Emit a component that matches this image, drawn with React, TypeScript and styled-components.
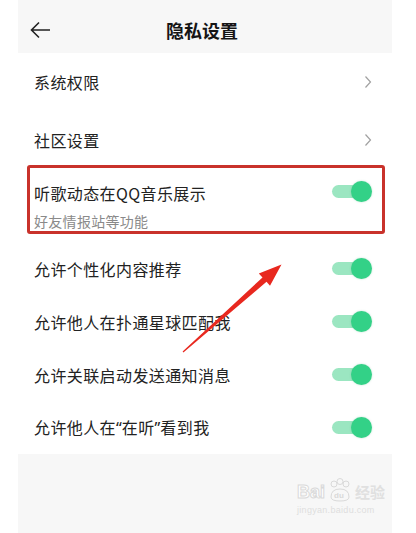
import styled, { createGlobalStyle } from "styled-components";

const GlobalStyle = createGlobalStyle`
  html, body {
    margin: 0;
    padding: 0;
    background: #ffffff;
  }
  body {
    font-family: "Noto Sans CJK SC", "Noto Sans", sans-serif;
    color: #222222;
  }
`

const Page = styled.div`
  position: relative;
  width: 416px;
  height: 533px;
  overflow: hidden;
  background: #ffffff;
`

const Panel = styled.div`
  margin: 0 24px 0 18px;
  display: flex;
  flex-direction: column;
  height: 533px;
`

const Header = styled.div`
  height: 53px;
  background: #f7f7f7;
  display: grid;
  grid-template-columns: 60px 1fr 60px;
  align-items: center;
`

const BackButton = styled.div`
  display: flex;
  align-items: center;
  padding-left: 12px;
  padding-top: 6px;
`

const Title = styled.div`
  text-align: center;
  font-size: 18px;
  font-weight: 700;
  color: #151515;
  padding-top: 6px;
  padding-right: 6px;
`

const List = styled.div`
  display: flex;
  flex-direction: column;
`

const Row = styled.div<{ $h: number }>`
  height: ${p => p.$h}px;
  display: flex;
  align-items: center;
  justify-content: space-between;
  padding: 0 20px 0 16px;
`

const Label = styled.span`
  font-size: 16px;
  line-height: 22px;
  color: #222222;
  letter-spacing: 0.4px;
`

const Quote = styled.span`
  font-family: "Noto Sans", sans-serif;
  letter-spacing: 0;
`

const Highlight = styled.div`
  margin: -4px 7px 8px 9px;
  height: 63px;
  border: 3px solid #c9322b;
  border-radius: 3px;
  display: flex;
  align-items: flex-start;
  justify-content: space-between;
  padding: 0 10px 0 4px;
`

const TextStack = styled.div`
  display: flex;
  flex-direction: column;
  gap: 7px;
  padding-top: 14px;
`

const SubLabel = styled.span`
  font-size: 14px;
  line-height: 20px;
  color: #8a8a8a;
  letter-spacing: 0.3px;
`

const Toggle = styled.div`
  position: relative;
  width: 40px;
  height: 21px;
  flex-shrink: 0;

  &::before {
    content: "";
    position: absolute;
    left: 0;
    right: 2px;
    top: 4px;
    height: 13px;
    border-radius: 7px;
    background: #9be6c1;
  }

  &::after {
    content: "";
    position: absolute;
    right: 0;
    top: 0;
    width: 21px;
    height: 21px;
    border-radius: 50%;
    background: #33d187;
    box-shadow: 0 0 2px rgba(40, 160, 100, 0.35);
  }
`

const HighlightToggle = styled(Toggle)`
  margin-top: 13px;
`

const Footer = styled.div`
  flex: 1;
  background: #f7f7f7;
`

const Overlay = styled.svg`
  position: absolute;
  left: 0;
  top: 0;
  pointer-events: none;
`

const Watermark = styled.div`
  position: absolute;
  left: 297px;
  top: 478px;
  display: flex;
  flex-direction: column;
  align-items: flex-start;
  color: #e2e2e2;
  font-family: "Liberation Sans", sans-serif;
`

const MarkTop = styled.div`
  display: flex;
  align-items: flex-end;
  gap: 2px;
  font-size: 18px;
  font-weight: 700;
  line-height: 20px;
`

const MarkLogo = styled.span`
  color: #ffffff;
  -webkit-text-stroke: 1px #d9d9d9;
`

const MarkCn = styled.span`
  font-family: "Noto Sans CJK SC", sans-serif;
  font-size: 15px;
  color: #e0e0e0;
`

const MarkUrl = styled.div`
  font-size: 9px;
  color: #dedede;
  margin-top: 3px;
  letter-spacing: 0.3px;
`

const Chevron = () => (
  <svg width="8" height="14" viewBox="0 0 8 14">
    <path d="M1.5 1.5 L6.5 7 L1.5 12.5" fill="none" stroke="#a0a0a0" strokeWidth="1.2" />
  </svg>
)

const toggles = [
  <>允许个性化内容推荐</>,
  <>允许他人在扑通星球匹配我</>,
  <>允许关联启动发送通知消息</>,
  <>允许他人在<Quote>“</Quote>在听<Quote>”</Quote>看到我</>,
]

export default function App() {
  return (
    <Page>
      <GlobalStyle />
      <Panel>
        <Header>
          <BackButton>
            <svg width="22" height="18" viewBox="0 0 22 18">
              <path d="M20 9 H2 M9 1.5 L1.5 9 L9 16.5" fill="none" stroke="#222" strokeWidth="1.6" />
            </svg>
          </BackButton>
          <Title>隐私设置</Title>
          <div />
        </Header>
        <List>
          <Row $h={58}>
            <Label>系统权限</Label>
            <Chevron />
          </Row>
          <Row $h={58}>
            <Label>社区设置</Label>
            <Chevron />
          </Row>
          <Highlight>
            <TextStack>
              <Label>听歌动态在QQ音乐展示</Label>
              <SubLabel>好友情报站等功能</SubLabel>
            </TextStack>
            <HighlightToggle />
          </Highlight>
          {toggles.map((t, i) => (
            <Row $h={53} key={i}>
              <Label>{t}</Label>
              <Toggle />
            </Row>
          ))}
        </List>
        <Footer />
      </Panel>
      <Overlay width="416" height="533" viewBox="0 0 416 533">
        <polygon
          points="183.4,352.6 266.5,281.8 270,285.8 281.5,264.5 258.8,273.4 262.5,277.4 182.6,351.4"
          fill="#e8281f"
        />
      </Overlay>
      <Watermark>
        <MarkTop>
          <MarkLogo>Bai</MarkLogo>
          <svg width="26" height="24" viewBox="0 0 26 24">
            <g fill="none" stroke="#d9d9d9" strokeWidth="1">
              <circle cx="7" cy="6" r="3" />
              <circle cx="13" cy="3.5" r="3" />
              <circle cx="19" cy="6" r="3" />
              <path d="M4 19 Q4 11 13 11 Q22 11 22 19 Q22 23 13 23 Q4 23 4 19 Z" />
            </g>
            <text x="7" y="20" fontSize="8" fill="#d9d9d9" fontFamily="Liberation Sans">du</text>
          </svg>
          <MarkCn>经验</MarkCn>
        </MarkTop>
        <MarkUrl>jingyan.baidu.com</MarkUrl>
      </Watermark>
    </Page>
  )
}
